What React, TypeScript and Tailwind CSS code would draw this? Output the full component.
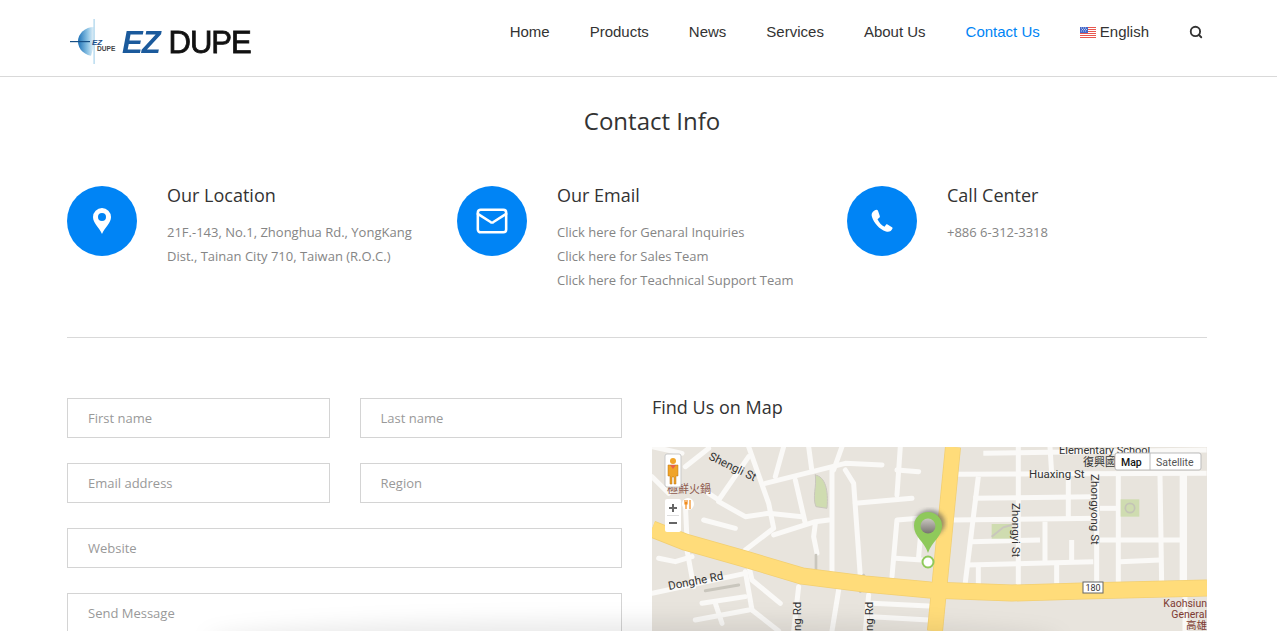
import React from "react";
import { Search, Mail } from "lucide-react";

const sans = "font-['Open_Sans',sans-serif]";

function LogoMark() {
  return (
    <svg width="48" height="46" viewBox="0 0 48 46" className="shrink-0">
      <defs>
        <linearGradient id="lg" x1="0" x2="1">
          <stop offset="0" stopColor="#1e72b8" />
          <stop offset="0.6" stopColor="#8dc3e4" />
          <stop offset="1" stopColor="#e8f3f9" />
        </linearGradient>
      </defs>
      <path d="M25 8 A16 14.5 0 0 0 25 37 Z" fill="url(#lg)" />
      <path d="M25 26L22 37L25 37L47 37L47 17L27 17Z" fill="#fff" />
      <rect x="1" y="22" width="20" height="1.2" fill="#174f85" />
      <rect x="24.5" y="0" width="1.2" height="45" fill="#a9d3ec" />
      <text x="23" y="26" fontSize="8" fontWeight="700" fontStyle="italic" fill="#1b4f8a" fontFamily="Liberation Sans">EZ</text>
      <text x="28" y="32" fontSize="6.6" fontWeight="700" fill="#444" fontFamily="Liberation Sans">DUPE</text>
    </svg>
  );
}

function Flag() {
  return (
    <svg width="16" height="11" viewBox="0 0 16 11" className="shrink-0">
      <rect width="16" height="11" fill="#fff" />
      {[0, 2, 4, 6, 8, 10].map((y) => (
        <rect key={y} y={y} width="16" height="1" fill="#e8574f" />
      ))}
      <rect width="8" height="6" fill="#4468c8" />
      <path d="M1 1h1M3 1h1M5 1h1M2 2.5h1M4 2.5h1M6 2.5h1M1 4h1M3 4h1M5 4h1" stroke="#dfe6fa" strokeWidth="0.8" />
    </svg>
  );
}

function Header() {
  const items = ["Home", "Products", "News", "Services", "About Us"];
  return (
    <header className="h-[77px] border-b border-[#d9d9d9] bg-white shrink-0 flex justify-between pl-[69px] pr-[74px] font-['Liberation_Sans',sans-serif]">
      <div className="flex items-center gap-[5px] pt-[7px]">
        <LogoMark />
        <div className="text-[32px] leading-none tracking-[-1px] scale-x-[0.97] origin-left whitespace-nowrap flex gap-[9px]">
          <span className="font-bold italic text-[#1b5a9c]">EZ</span>
          <span className="text-[#111] [-webkit-text-stroke:0.8px_#111]">DUPE</span>
        </div>
      </div>
      <nav className="flex items-start gap-10 pt-[23px] text-[15px] leading-[18px] text-[#333]">
        {items.map((i) => (
          <span key={i}>{i}</span>
        ))}
        <span className="text-[#0084f5]">Contact Us</span>
        <span className="flex items-center gap-1">
          <Flag />
          English
        </span>
        <Search size={14} strokeWidth={3.2} className="mt-[2px]" />
      </nav>
    </header>
  );
}

function InfoItem({ icon, title, lines }: { icon: React.ReactNode; title: string; lines: string[] }) {
  return (
    <div className="w-[390px] shrink-0 flex gap-[30px]">
      <div className="w-[70px] h-[70px] rounded-full bg-[#0084f5] text-white flex items-center justify-center shrink-0">{icon}</div>
      <div className="w-[250px]">
        <h3 className="text-[18px] leading-[20px] text-[#333] -mt-px mb-[15px]">{title}</h3>
        {lines.map((l) => (
          <p key={l} className="text-[13px] leading-[24px] text-[#858585] whitespace-nowrap">{l}</p>
        ))}
      </div>
    </div>
  );
}

function Field({ label, cls = "" }: { label: string; cls?: string }) {
  return (
    <div className={`h-10 border border-[#d4d4d4] px-5 pt-[2px] flex items-center text-[13px] text-[#999] ${cls}`}>{label}</div>
  );
}

function MapCanvas() {
  const left = [
    "M100 80L170 25", "M0 110L50 160", "M170 160L200 180L290 50", "M290 20L350 190L365 265L280 330L300 420L385 490",
    "M340 130L580 70L690 75", "M430 120L460 250", "M370 110L395 20", "M470 20L480 95", "M570 20L545 90", "M540 90L540 400",
    "M580 90L605 130L625 410", "M610 190L780 175", "M745 20L735 165", "M735 90L800 95", "M200 185L280 230L350 220L450 230",
    "M155 240L250 265", "M365 285L490 245L530 240", "M490 250L485 290L495 340", "M100 190L105 300", "M105 330L125 440",
    "M20 355L70 365L120 350", "M720 410L735 240L800 235", "M810 240L800 350", "M730 355L810 360", "M0 460L280 400",
    "M280 395L300 510", "M150 490L280 470", "M190 490L210 550", "M300 510L380 573", "M440 440L425 573", "M560 450L540 573",
    "M650 465L640 573", "M660 490L830 498", "M660 530L830 540", "M130 540L290 510", "M90 40L0 20",
  ];
  const right = [
    "M190 40L860 30", "M110 103L860 100", "M160 175L520 170", "M95 240L540 235", "M155 305L360 300", "M140 375L520 365",
    "M600 365L720 360", "M540 300L790 300", "M540 205L590 205", "M175 110L135 435", "M295 20L295 435", "M375 245L375 365",
    "M445 110L445 240", "M530 100L530 430", "M595 100L595 430", "M720 100L725 430", "M390 20L395 100", "M410 375L410 430",
    "M175 380L175 435", "M455 300L455 365", "M795 470L795 573",
  ];
  const mainRoad = "M0 82L33 95L93 112L150 129L213 137L278 143L360 146L431 144L555 141";
  return (
    <svg viewBox="0 0 555 184" className="w-full h-full block font-['Roboto',sans-serif]">
      <defs>
        <linearGradient id="hole" x1="0" x2="0" y1="0" y2="1">
          <stop offset="0" stopColor="#c9c6c0" />
          <stop offset="1" stopColor="#77746f" />
        </linearGradient>
        <filter id="soft"><feGaussianBlur stdDeviation="2" /></filter>
      </defs>
      <rect width="555" height="184" fill="#e8e4dd" />
      <g transform="translate(0,-7) scale(0.3333)" fill="none" stroke="#faf9f7" strokeWidth="15" strokeLinecap="round" strokeLinejoin="round">
        {left.map((d) => <path key={d} d={d} />)}
        <path d="M490 105C520 110 530 150 525 205L492 200C480 170 495 140 490 105Z" fill="#cfdcb0" stroke="#c9c6bd" strokeWidth="3" />
        <path d="M160 452L260 435" stroke="#c9c6bd" strokeWidth="9" />
        <path d="M492 345L492 390" stroke="#c9c6bd" strokeWidth="8" />
        <path d="M635 405L625 455" stroke="#c9c6bd" strokeWidth="8" />
      </g>
      <g transform="translate(268,-7) scale(0.3333)" fill="none" stroke="#faf9f7" strokeWidth="15" strokeLinecap="butt">
        {right.map((d) => <path key={d} d={d} />)}
        <path d="M790 100L790 430" strokeWidth="22" />
        <rect x="602" y="178" width="56" height="52" fill="#cfdcb0" stroke="none" />
        <circle cx="630" cy="204" r="14" fill="none" stroke="#c4c4b6" strokeWidth="5" />
        <rect x="215" y="252" width="60" height="44" fill="#cfdcb0" stroke="none" />
        <path d="M215 290L250 262L275 255" stroke="#c9c6bd" strokeWidth="6" />
      </g>
      <g fill="none" strokeLinejoin="round">
        <path d={mainRoad} stroke="#f2cf72" strokeWidth="17" />
        <path d="M301 0L283 184" stroke="#f2cf72" strokeWidth="16" />
        <path d={mainRoad} stroke="#ffdc7a" strokeWidth="15.5" />
        <path d="M301 0L283 184" stroke="#ffdc7a" strokeWidth="14.5" />
      </g>
      <g fontSize="11.5" fill="#333">
        <text x="56" y="12" transform="rotate(26 56 12)">Shengli St</text>
        <text x="17" y="143" transform="rotate(-11 17 143)">Donghe Rd</text>
        <text x="149" y="184" transform="rotate(-90 149 184)">ng Rd</text>
        <text x="221" y="184" transform="rotate(-90 221 184)">ng Rd</text>
        <text x="377" y="31">Huaxing St</text>
        <text x="360" y="56" transform="rotate(90 360 56)">Zhongyi St</text>
        <text x="439" y="27" transform="rotate(90 439 27)">Zhongyong St</text>
      </g>
      <g fontSize="11" fill="#333">
        <text x="407" y="7">Elementary School</text>
        <text x="431" y="19" fontFamily="Noto Sans CJK TC">復興國</text>
      </g>
      <g fontSize="10.5" fill="#7d3b32" textAnchor="end">
        <text x="555" y="160">Kaohsiun</text>
        <text x="555" y="171">General</text>
        <text x="555" y="182" fontFamily="Noto Sans CJK TC">高雄</text>
      </g>
      <text x="15" y="46" fontSize="11" fill="#8e5a4e" fontFamily="Noto Sans CJK TC">極鮮火鍋</text>
      <circle cx="36" cy="57" r="6" fill="#fff" />
      <path d="M33 53v4h2v-4M34 55v7M38 53v9" stroke="#f08b1d" strokeWidth="1.2" fill="none" />
      <rect x="431" y="135" width="20" height="11" fill="#fff" stroke="#666" />
      <text x="441" y="144" fontSize="9" fill="#333" textAnchor="middle">180</text>
      <ellipse cx="278" cy="76" rx="15" ry="13" fill="#555" opacity="0.6" filter="url(#soft)" />
      <path d="M276 106C272 94 262 90 262 79A14 14 0 0 1 290 79C290 90 280 94 276 106Z" fill="#8fc95b" />
      <circle cx="276" cy="79" r="7.5" fill="url(#hole)" />
      <circle cx="276" cy="115" r="5.5" fill="#fff" stroke="#8fc95b" strokeWidth="2" />
      <g transform="translate(13,7)">
        <rect width="16" height="33" rx="2" fill="#fff" stroke="#c9c9c9" />
        <circle cx="8" cy="7" r="3" fill="#f0a429" />
        <path d="M3 11h10v11h-2v8H9v-7H7v7H5v-8H3Z" fill="#f0a429" stroke="#b8761a" strokeWidth="0.5" />
        <path d="M5 11h6l-3 4Z" fill="#e8604c" />
      </g>
      <g transform="translate(13,52)">
        <rect width="16" height="33" rx="2" fill="#fff" />
        <path d="M4 9h8M8 5v8M4 24h8" stroke="#666" strokeWidth="2" />
        <path d="M2 16.5h12" stroke="#ddd" />
      </g>
      <g transform="translate(463,6)">
        <rect width="86" height="17" rx="2" fill="#fff" stroke="#bbb" />
        <path d="M35 0v17" stroke="#bbb" />
        <text x="6" y="12.5" fontSize="10.5" fontWeight="500" fill="#111">Map</text>
        <text x="41" y="12.5" fontSize="10.5" fill="#555">Satellite</text>
      </g>
    </svg>
  );
}

export default function App() {
  return (
    <div className={`relative h-[631px] overflow-hidden bg-white flex flex-col ${sans}`}>
      <Header />
      <main className="w-[1140px] ml-[67px]">
        <h2 className="w-[1170px] text-[24px] leading-[32px] text-[#333] text-center mt-[28px]">Contact Info</h2>
        <section className="flex mt-[49px] h-[152px] border-b border-[#d9d9d9]">
          <InfoItem icon={<svg width="18" height="26" viewBox="0 0 18 26"><path fillRule="evenodd" d="M9 26C6 19 0 15 0 9A9 9 0 0 1 18 9C18 15 12 19 9 26ZM9 5a4 4 0 1 0 0 8a4 4 0 0 0 0-8Z" fill="#fff" /></svg>} title="Our Location" lines={["21F.-143, No.1, Zhonghua Rd., YongKang", "Dist., Tainan City 710, Taiwan (R.O.C.)"]} />
          <InfoItem icon={<Mail size={34} strokeWidth={1.8} />} title="Our Email" lines={["Click here for Genaral Inquiries", "Click here for Sales Team", "Click here for Teachnical Support Team"]} />
          <InfoItem
            icon={
              <svg width="24" height="24" viewBox="0 0 24 24">
                <path d="M4.5 1.5C2 3 1 5 2 8c2 6 7 12 14 14.5 3 1 5.5-.5 6.5-3 .2-.6 0-1-.5-1.300l-4.500-2.700c-.6-.3-1.100-.2-1.500.3l-1.500 2c-3-1.500-5.500-4.300-7-7.500l2-1.800c.4-.4.5-.9.3-1.400L8 1.800C7.500.5 5.800.7 4.500 1.500Z" fill="#fff" />
              </svg>
            }
            title="Call Center"
            lines={["+886 6-312-3318"]}
          />
        </section>
        <section className="grid grid-cols-2 gap-[30px] mt-[60px]">
          <div className="flex flex-col gap-[25px]">
            <div className="grid grid-cols-2 gap-[30px]">
              <Field label="First name" />
              <Field label="Last name" />
            </div>
            <div className="grid grid-cols-2 gap-[30px]">
              <Field label="Email address" />
              <Field label="Region" />
            </div>
            <Field label="Website" />
            <Field label="Send Message" cls="h-[120px] items-start pt-[10px]" />
          </div>
          <div>
            <h3 className="text-[18px] leading-[20px] text-[#333] -mt-px">Find Us on Map</h3>
            <div className="w-[555px] h-[184px] mt-[30px]">
              <MapCanvas />
            </div>
          </div>
        </section>
      </main>
      <div className="absolute left-[205px] right-[215px] top-[620px] h-[40px] rounded-[50%] bg-[#00000014] blur-[10px]" />
    </div>
  );
}
